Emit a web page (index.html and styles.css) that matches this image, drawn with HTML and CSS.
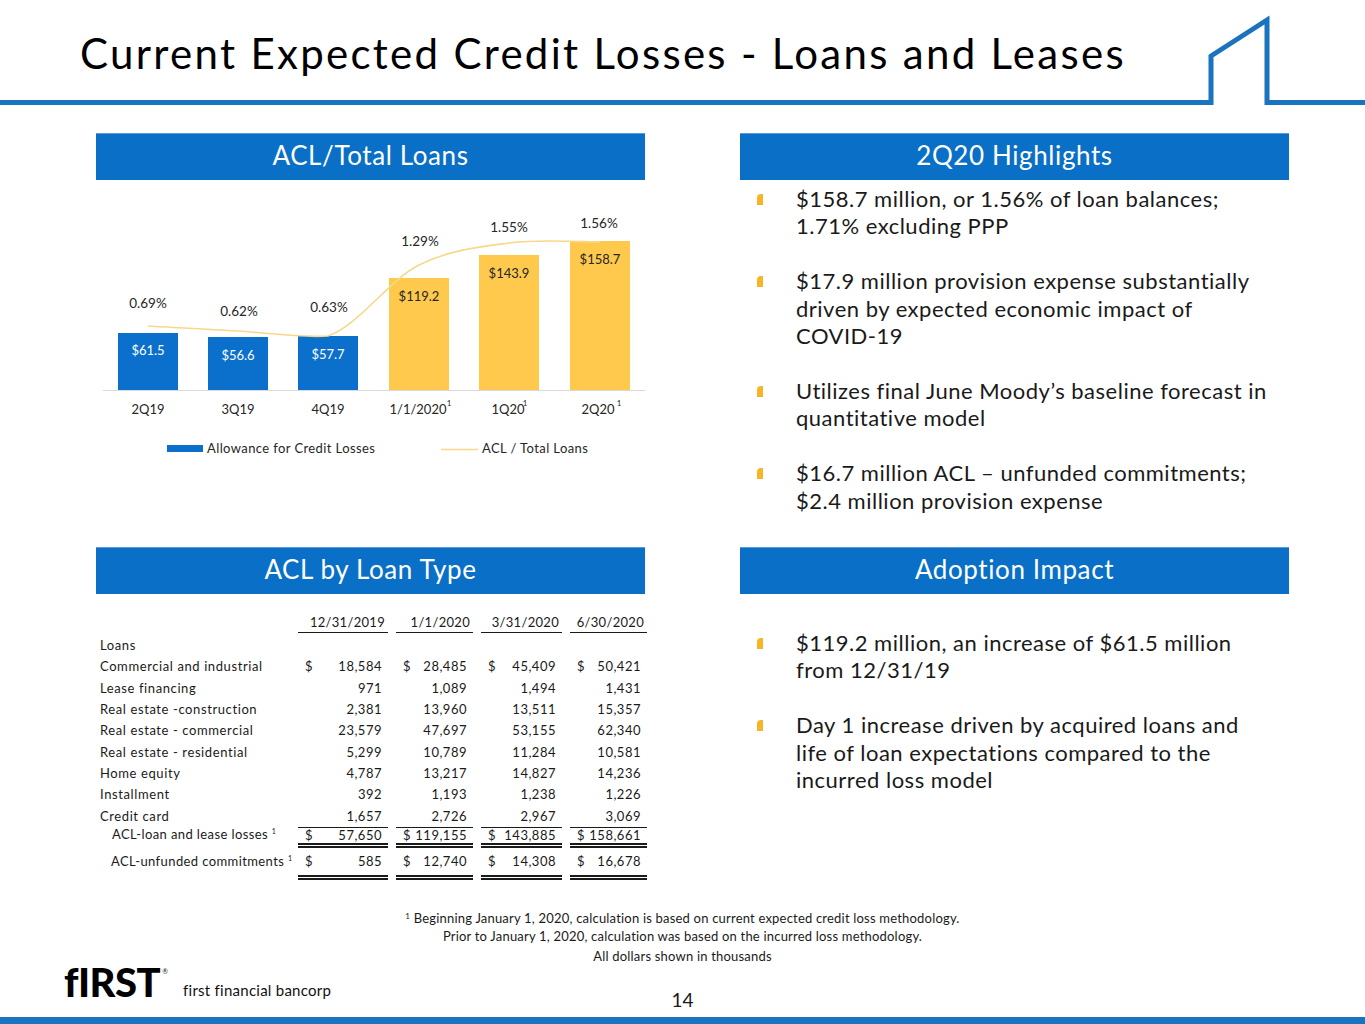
FILE: index.html
```html
<!DOCTYPE html>
<html lang="en">
<head>
<meta charset="utf-8">
<title>Current Expected Credit Losses - Loans and Leases</title>
<link rel="stylesheet" href="styles.css">
</head>
<body>
<header class="top">
  <h1 class="title">Current Expected Credit Losses - Loans and Leases</h1>
  <svg class="rule" width="1365" height="110" viewBox="0 0 1365 110" aria-hidden="true">
    <polyline points="0,102.5 1211,102.5 1211,56 1267,20 1267,102.5 1365,102.5" fill="none" stroke="#1a73be" stroke-width="5" stroke-linejoin="miter"/>
  </svg>
</header>

<main class="grid">
  <section class="panel">
    <h2 class="bar">ACL/Total Loans</h2>
    <svg class="chart" width="549" height="290" viewBox="0 0 549 290">
      <line x1="7" y1="210.5" x2="549" y2="210.5" stroke="#d9d9d9" stroke-width="1"/>
      <rect x="22" y="153" width="60" height="57" fill="#0b6fcc"/>
      <rect x="112" y="157" width="60" height="53" fill="#0b6fcc"/>
      <rect x="202" y="156" width="60" height="54" fill="#0b6fcc"/>
      <rect x="293" y="98" width="60" height="112" fill="#fec94c"/>
      <rect x="383" y="75" width="60" height="135" fill="#fec94c"/>
      <rect x="474" y="61" width="60" height="149" fill="#fec94c"/>
      <path d="M52,146 C67,147 112,149 142,151 C172,153 205,158 232,156 C262,146 293,100 323,85 C353,70 383,67 413,63 C443,59 489,62 504,62" fill="none" stroke="#f7d88a" stroke-width="1.6"/>
      <g class="val-w">
        <text x="52" y="175">$61.5</text>
        <text x="142" y="180">$56.6</text>
        <text x="232" y="179">$57.7</text>
      </g>
      <g class="val-d">
        <text x="323" y="121">$119.2</text>
        <text x="413" y="98">$143.9</text>
        <text x="504" y="84">$158.7</text>
      </g>
      <g class="pct">
        <text x="52" y="128">0.69%</text>
        <text x="143" y="136">0.62%</text>
        <text x="233" y="132">0.63%</text>
        <text x="324" y="66">1.29%</text>
        <text x="413" y="52">1.55%</text>
        <text x="503" y="48">1.56%</text>
      </g>
      <g class="xl">
        <text x="52" y="234">2Q19</text>
        <text x="142" y="234">3Q19</text>
        <text x="232" y="234">4Q19</text>
        <text x="322" y="234">1/1/2020</text>
        <text x="412" y="234">1Q20</text>
        <text x="502" y="234">2Q20</text>
      </g>
      <g class="sup">
        <text x="353" y="226">1</text>
        <text x="429" y="226">1</text>
        <text x="523" y="226">1</text>
      </g>
      <rect x="71" y="265" width="36" height="7" fill="#0b6fcc"/>
      <text class="leg" x="111" y="273">Allowance for Credit Losses</text>
      <line x1="345" y1="269.5" x2="382" y2="269.5" stroke="#f7d88a" stroke-width="1.6"/>
      <text class="leg" x="386" y="273">ACL / Total Loans</text>
    </svg>
  </section>

  <section class="panel">
    <h2 class="bar">2Q20 Highlights</h2>
    <ul class="bullets first">
      <li><span class="mark"></span><p>$158.7 million, or 1.56% of loan balances;<br>1.71% excluding PPP</p></li>
      <li><span class="mark"></span><p>$17.9 million provision expense substantially<br>driven by expected economic impact of<br>COVID-19</p></li>
      <li><span class="mark"></span><p>Utilizes final June Moody’s baseline forecast in<br>quantitative model</p></li>
      <li><span class="mark"></span><p>$16.7 million ACL – unfunded commitments;<br>$2.4 million provision expense</p></li>
    </ul>
  </section>

  <section class="panel">
    <h2 class="bar">ACL by Loan Type</h2>
    <div class="tbl">
      <div class="trow head">
        <span></span>
        <span class="hc">12/31/2019</span>
        <span class="hc">1/1/2020</span>
        <span class="hc">3/31/2020</span>
        <span class="hc">6/30/2020</span>
      </div>
      <div class="trow"><span class="lab">Loans</span><span></span><span></span><span></span><span></span></div>
      <div class="trow"><span class="lab">Commercial and industrial</span>
        <span class="c"><i>$</i><b>18,584</b></span><span class="c"><i>$</i><b>28,485</b></span><span class="c"><i>$</i><b>45,409</b></span><span class="c"><i>$</i><b>50,421</b></span></div>
      <div class="trow"><span class="lab">Lease financing</span>
        <span class="c"><i></i><b>971</b></span><span class="c"><i></i><b>1,089</b></span><span class="c"><i></i><b>1,494</b></span><span class="c"><i></i><b>1,431</b></span></div>
      <div class="trow"><span class="lab">Real estate -construction</span>
        <span class="c"><i></i><b>2,381</b></span><span class="c"><i></i><b>13,960</b></span><span class="c"><i></i><b>13,511</b></span><span class="c"><i></i><b>15,357</b></span></div>
      <div class="trow"><span class="lab">Real estate - commercial</span>
        <span class="c"><i></i><b>23,579</b></span><span class="c"><i></i><b>47,697</b></span><span class="c"><i></i><b>53,155</b></span><span class="c"><i></i><b>62,340</b></span></div>
      <div class="trow"><span class="lab">Real estate - residential</span>
        <span class="c"><i></i><b>5,299</b></span><span class="c"><i></i><b>10,789</b></span><span class="c"><i></i><b>11,284</b></span><span class="c"><i></i><b>10,581</b></span></div>
      <div class="trow"><span class="lab">Home equity</span>
        <span class="c"><i></i><b>4,787</b></span><span class="c"><i></i><b>13,217</b></span><span class="c"><i></i><b>14,827</b></span><span class="c"><i></i><b>14,236</b></span></div>
      <div class="trow"><span class="lab">Installment</span>
        <span class="c"><i></i><b>392</b></span><span class="c"><i></i><b>1,193</b></span><span class="c"><i></i><b>1,238</b></span><span class="c"><i></i><b>1,226</b></span></div>
      <div class="trow"><span class="lab">Credit card</span>
        <span class="c"><i></i><b>1,657</b></span><span class="c"><i></i><b>2,726</b></span><span class="c"><i></i><b>2,967</b></span><span class="c"><i></i><b>3,069</b></span></div>
      <div class="trow total t1"><span class="lab ind">ACL-loan and lease losses <sup>1</sup></span>
        <span class="c"><i>$</i><b>57,650</b></span><span class="c"><i>$</i><b>119,155</b></span><span class="c"><i>$</i><b>143,885</b></span><span class="c"><i>$</i><b>158,661</b></span></div>
      <div class="trow total t2"><span class="lab ind2">ACL-unfunded commitments <sup>1</sup></span>
        <span class="c"><i>$</i><b>585</b></span><span class="c"><i>$</i><b>12,740</b></span><span class="c"><i>$</i><b>14,308</b></span><span class="c"><i>$</i><b>16,678</b></span></div>
    </div>
  </section>

  <section class="panel">
    <h2 class="bar">Adoption Impact</h2>
    <ul class="bullets second">
      <li><span class="mark"></span><p>$119.2 million, an increase of $61.5 million<br>from 12/31/19</p></li>
      <li><span class="mark"></span><p>Day 1 increase driven by acquired loans and<br>life of loan expectations compared to the<br>incurred loss model</p></li>
    </ul>
  </section>
</main>

<div class="notes">
  <p><sup>1</sup> Beginning January 1, 2020, calculation is based on current expected credit loss methodology.</p>
  <p>Prior to January 1, 2020, calculation was based on the incurred loss methodology.</p>
  <p class="thou">All dollars shown in thousands</p>
</div>

<footer class="foot">
  <div class="logo"><span class="mark-first">fIRST</span><span class="reg">®</span><span class="name">first financial bancorp</span></div>
  <div class="page">14</div>
  <div></div>
</footer>
<div class="bottom-bar"></div>
</body>
</html>
```

FILE: styles.css
```css
* { box-sizing: border-box; }
html, body { margin: 0; padding: 0; }
body {
  width: 1365px;
  background: #ffffff;
  color: #1a1a1a;
  font-family: "Lato", "Open Sans", sans-serif;
}

/* header */
.top {
  display: grid;
  height: 110px;
}
.top > * { grid-area: 1 / 1; }
.title {
  margin: 0;
  padding: 31px 0 0 80px;
  font-family: "Lato", sans-serif;
  font-weight: 400;
  font-size: 42px;
  line-height: 44px;
  color: #000;
  letter-spacing: 2.3px;
}
.rule { display: block; }

/* main grid */
.grid {
  display: grid;
  grid-template-columns: 549px 549px;
  grid-template-rows: 414px 362px;
  column-gap: 95px;
  padding-left: 96px;
  margin-top: 23px;
}
.panel { min-width: 0; }
.bar {
  margin: 0;
  height: 47px;
  background: #0a6fc6;
  border-top: 1px solid #5a9ad6;
  color: #ffffff;
  font-weight: 400;
  font-size: 26px;
  line-height: 42px;
  letter-spacing: 0.6px;
  text-align: center;
}

/* chart */
.chart { display: block; font-family: "Lato", sans-serif; }
.chart text { font-size: 13px; text-anchor: middle; fill: #262626; }
.chart .val-w text { fill: #ffffff; font-size: 13px; }
.chart .val-d text { fill: #262626; font-size: 13px; }
.chart .pct text { font-size: 13.5px; }
.chart .sup text { font-size: 8px; }
.chart text.leg { text-anchor: start; font-size: 13px; letter-spacing: 0.4px; }

/* bullets */
.bullets {
  list-style: none;
  margin: 0;
  padding: 0;
}
.bullets.first { margin-top: 5px; }
.bullets.second { margin-top: 35px; }
.bullets li {
  display: flex;
  align-items: flex-start;
  margin-bottom: 27.5px;
}
.bullets .mark {
  flex: none;
  width: 6px;
  height: 11px;
  margin: 9px 33px 0 17px;
  background: #f6b623;
  border-radius: 4px 0 0 0;
}
.bullets p {
  margin: 0;
  font-size: 22px;
  line-height: 27.4px;
  letter-spacing: 0.5px;
  color: #1a1a1a;
  white-space: nowrap;
}

/* table */
.tbl {
  margin: 18px 0 0 4px;
  width: 552px;
  font-size: 13px;
  letter-spacing: 0.6px;
  color: #1a1a1a;
}
.trow {
  display: grid;
  grid-template-columns: 190px 90px 77px 81px 77px;
  column-gap: 8px;
  height: 21.3px;
  align-items: center;
}
.trow.head {
  height: 21px;
  margin-bottom: 2px;
}
.hc {
  text-align: right;
  padding-right: 3px;
  border-bottom: 1px solid #1a1a1a;
  line-height: 20px;
  letter-spacing: 0.3px;
}
.c {
  display: flex;
  justify-content: space-between;
  gap: 3px;
  padding: 0 6px 0 7px;
  line-height: 15px;
}
.c i, .c b { font-style: normal; font-weight: 400; }
.c b { letter-spacing: 0.5px; }
.lab { white-space: nowrap; line-height: 15px; }
.lab.ind { padding-left: 12px; letter-spacing: 0.4px; }
.lab.ind2 { padding-left: 11px; letter-spacing: 0.4px; }
.lab sup { font-size: 7px; line-height: 0; vertical-align: 5px; }
.trow.total { align-items: stretch; }
.trow.t1 { height: 21px; }
.trow.t1 .c {
  border-top: 1px solid #1a1a1a;
  border-bottom: 5px double #1a1a1a;
  align-items: center;
}
.trow.t1 .lab { align-self: start; padding-top: 0; }
.trow.t2 { height: 32px; }
.trow.t2 .c {
  border-bottom: 5px double #1a1a1a;
  align-items: center;
}
.trow.t2 .lab { align-self: center; padding-bottom: 5px; }

/* footnotes */
.notes {
  text-align: center;
  font-size: 13px;
  letter-spacing: 0.2px;
  color: #1a1a1a;
}
.notes p { margin: 0; line-height: 18px; }
.notes sup { font-size: 8px; line-height: 0; vertical-align: 4px; }
.notes .thou { margin-top: 2px; line-height: 18px; }

/* footer */
.foot {
  display: grid;
  grid-template-columns: 1fr auto 1fr;
  height: 52px;
  align-items: end;
}
.logo {
  display: flex;
  align-items: flex-end;
  padding-left: 64px;
  padding-bottom: 18px;
}
.mark-first {
  font-family: "Lato", sans-serif;
  font-weight: 900;
  font-size: 40px;
  line-height: 34px;
  color: #000;
  letter-spacing: -0.5px;
}
.reg {
  font-size: 7px;
  line-height: 8px;
  align-self: flex-start;
  margin: 2px 0 0 2px;
}
.name {
  margin-left: 15px;
  margin-bottom: 1px;
  font-size: 15px;
  line-height: 15px;
  letter-spacing: 0.25px;
  color: #111;
}
.page {
  font-size: 19px;
  line-height: 22px;
  padding-bottom: 6px;
  color: #1a1a1a;
}
.bottom-bar {
  height: 7px;
  background: #1a73be;
}
```
